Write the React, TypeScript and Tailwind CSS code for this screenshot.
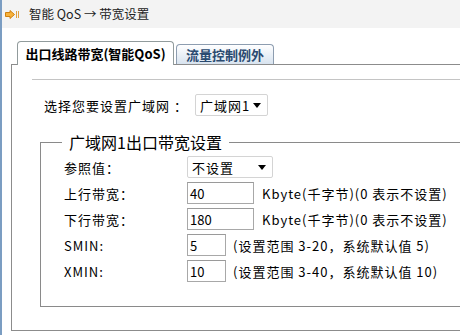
const font = "font-['Noto_Sans_CJK_SC',sans-serif]";

function Arrow() {
  return (
    <svg width="14" height="9" viewBox="0 0 14 9" className="shrink-0">
      <path d="M0.5 2.5 H5 V0.5 L9.5 4.5 L5 8.5 V6.5 H0.5 Z" fill="#f7b23b" stroke="#d0800f" strokeWidth="1" />
      <rect x="11" y="1" width="1" height="7" fill="#e0a040" />
      <rect x="13" y="1" width="1" height="7" fill="#e0a040" />
    </svg>
  );
}

function FakeSelect({ value, width }: { value: string; width: string }) {
  return (
    <div
      className={`${width} flex h-[22px] items-center justify-between rounded-[2px] border border-[#d4d4d4] bg-white pl-[4px] pr-[6px] text-[13px] tracking-[1px]`}
    >
      <span>{value}</span>
      <span className="h-0 w-0 border-x-[4px] border-t-[5px] border-x-transparent border-t-black" />
    </div>
  );
}

function Field({ value, width }: { value: string; width: string }) {
  return (
    <div
      className={`${width} flex h-[22px] items-center border border-[#a8a8a8] border-t-[#9a9a9a] bg-white pl-[2px] text-[13px]`}
    >
      {value}
    </div>
  );
}

function Row({ label, children }: { label: string; children: React.ReactNode }) {
  return (
    <div className="flex h-[26px] items-center">
      <div className="w-[146px] shrink-0 pl-[23px] text-[13px] tracking-[1px]">{label}</div>
      {children}
    </div>
  );
}

export default function App() {
  return (
    <div className={`${font} relative h-[335px] w-[460px] overflow-hidden border-l-2 border-[#7b9dc2] bg-white leading-none text-black`}>
      <div className="flex h-[28px] items-center gap-[10px] bg-[#f3f3f3] pl-[3px]">
        <Arrow />
        <span className="text-[12.5px] text-[#222]">智能 QoS → 带宽设置</span>
      </div>

      <div className="mt-[13px] pl-[9px]">
        <div className="flex items-end gap-[2px] pl-[6px]">
          <div className="relative z-10 -mb-px flex h-[24px] w-[157px] items-center justify-center rounded-t-[4px] border border-b-0 border-[#919b9c] bg-white text-[13px] font-bold">
            出口线路带宽(智能QoS)
          </div>
          <div className="flex h-[20px] w-[98px] items-center justify-center rounded-t-[4px] border border-b-0 border-[#8d9db0] bg-linear-to-b from-white to-[#d8e3ef] text-[13px] font-bold text-[#2a4a70]">
            流量控制例外
          </div>
        </div>

        <div className="h-[267px] w-[470px] border border-r-0 border-[#8c8c8c] bg-white">
          <div className="ml-[20px] mt-[14px] border-t border-[#c4c4c4]" />

          <div className="mt-[14px] flex items-center pl-[32px]">
            <span className="w-[151px] text-[13px] tracking-[1px]">选择您要设置广域网 ：</span>
            <FakeSelect value="广域网1" width="w-[73px]" />
          </div>

          <fieldset className="ml-[28px] mt-[17px] h-[174px] w-[440px] border border-[#8a8a8a] pt-[3px]">
            <legend className="ml-[21px] px-[7px] text-[16px] leading-[18px]">广域网1出口带宽设置</legend>
            <Row label="参照值：">
              <FakeSelect value="不设置" width="w-[86px]" />
            </Row>
            <Row label="上行带宽：">
              <Field value="40" width="w-[67px]" />
              <span className="ml-[8px] text-[13px] tracking-[1px]">Kbyte(千字节)(0 表示不设置)</span>
            </Row>
            <Row label="下行带宽：">
              <Field value="180" width="w-[67px]" />
              <span className="ml-[8px] text-[13px] tracking-[1px]">Kbyte(千字节)(0 表示不设置)</span>
            </Row>
            <Row label="SMIN:">
              <Field value="5" width="w-[39px]" />
              <span className="ml-[7px] text-[13px] tracking-[1px]">(设置范围 3-20，系统默认值 5)</span>
            </Row>
            <Row label="XMIN:">
              <Field value="10" width="w-[39px]" />
              <span className="ml-[7px] text-[13px] tracking-[1px]">(设置范围 3-40，系统默认值 10)</span>
            </Row>
          </fieldset>
        </div>
      </div>
    </div>
  );
}
